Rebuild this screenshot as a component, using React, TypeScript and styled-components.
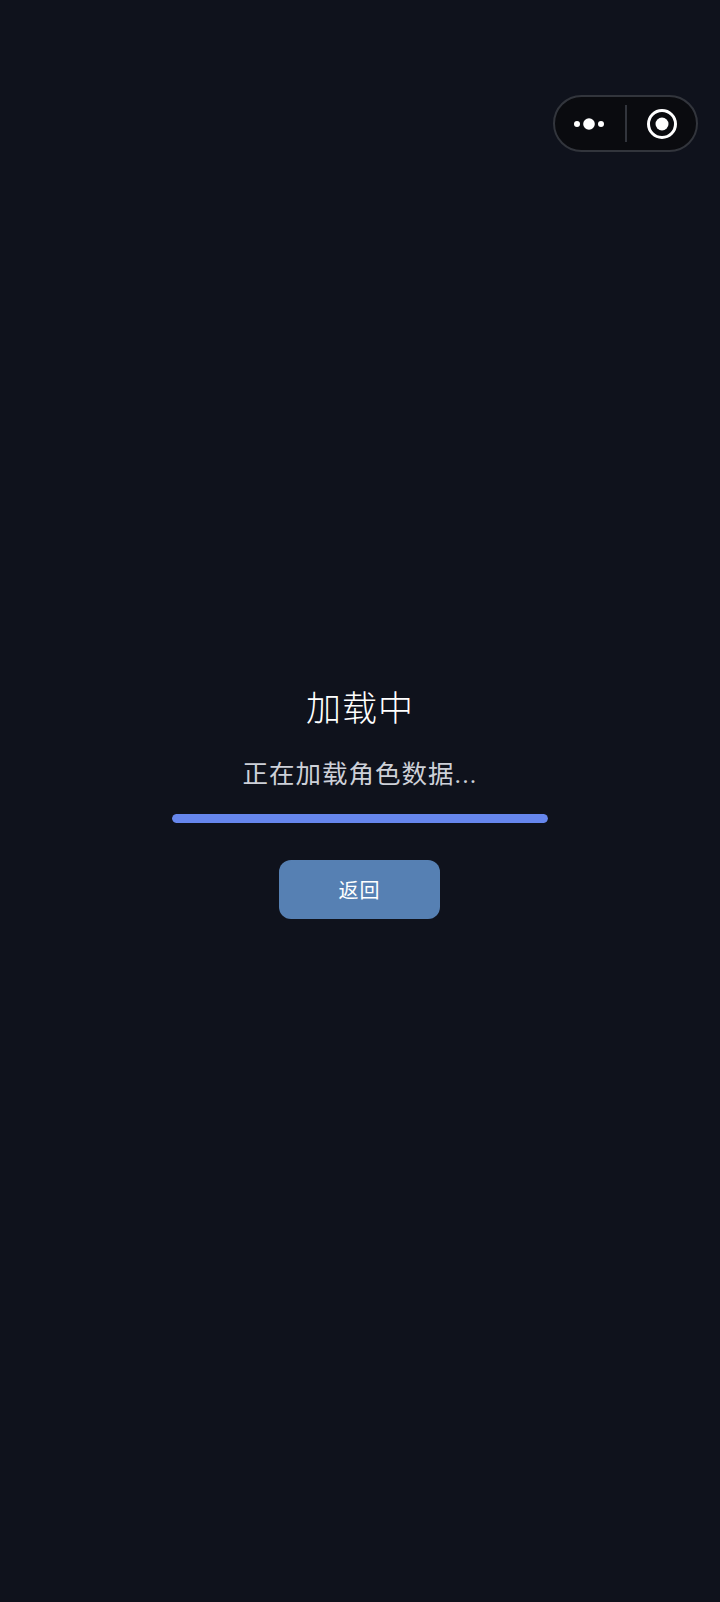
import React from "react";
import styled, { createGlobalStyle } from "styled-components";

const Global = createGlobalStyle`
  html, body { margin: 0; padding: 0; background: #0f121c; }
  body { font-family: "Roboto", "Noto Sans CJK SC", sans-serif; }
`;

const Page = styled.main`
  position: relative;
  width: 720px;
  height: 1602px;
  background: #0f121c;
  display: flex;
  flex-direction: column;
  align-items: center;
  padding-top: 682px;
  box-sizing: border-box;
  overflow: hidden;
`;

const Capsule = styled.div`
  position: absolute;
  top: 95px;
  left: 553px;
  width: 145px;
  height: 57px;
  box-sizing: border-box;
  border: 2px solid #32353c;
  border-radius: 29px;
  background: #0a0b0f;
  display: flex;
  align-items: center;
`;

const CapsuleSlot = styled.div`
  flex: 1;
  display: flex;
  align-items: center;
  justify-content: center;
`;

const DotsSlot = styled(CapsuleSlot)`
  padding-right: 1px;
`;

const RingSlot = styled(CapsuleSlot)`
  padding-left: 1px;
`;

const CapsuleDivider = styled.div`
  width: 2px;
  height: 37px;
  background: #32353c;
`;

const Title = styled.h1`
  margin: 2px 0 0;
  font-size: 35px;
  line-height: 52px;
  font-weight: 300;
  color: #ffffff;
  letter-spacing: 1px;
`;

const Subtitle = styled.p`
  margin: 19px 0 0;
  font-size: 25.5px;
  line-height: 38px;
  font-weight: 400;
  color: #cdd0d8;
  letter-spacing: 1px;
`;

const Track = styled.div`
  width: 376px;
  height: 9px;
  margin-top: 21px;
  border-radius: 5px;
  background: #2a3040;
  overflow: hidden;
`;

const Fill = styled.div`
  height: 100%;
  border-radius: 5px;
  background: #6686ec;
`;

const BackButton = styled.button`
  width: 161px;
  height: 59px;
  margin: 37px 1px 0 0;
  border: 0;
  border-radius: 12px;
  background: #5680b3;
  color: #ffffff;
  font-family: inherit;
  font-size: 20px;
  letter-spacing: 1px;
  font-weight: 400;
  padding: 0;
`;

export default function App() {
  const progress = 100;
  return (
    <Page>
      <Global />
      <Capsule>
        <DotsSlot>
          <svg width="30" height="12" viewBox="0 0 30 12">
            <circle cx="3" cy="6" r="3" fill="#fff" />
            <circle cx="15" cy="6" r="5.8" fill="#fff" />
            <circle cx="27" cy="6" r="3" fill="#fff" />
          </svg>
        </DotsSlot>
        <CapsuleDivider />
        <RingSlot>
          <svg width="30" height="30" viewBox="0 0 30 30">
            <circle cx="15" cy="15" r="13.5" fill="none" stroke="#fff" strokeWidth="3" />
            <circle cx="15" cy="15" r="6.5" fill="#fff" />
          </svg>
        </RingSlot>
      </Capsule>
      <Title>加载中</Title>
      <Subtitle>正在加载角色数据...</Subtitle>
      <Track>
        <Fill style={{ width: `${progress}%` }} />
      </Track>
      <BackButton>返回</BackButton>
    </Page>
  );
}
